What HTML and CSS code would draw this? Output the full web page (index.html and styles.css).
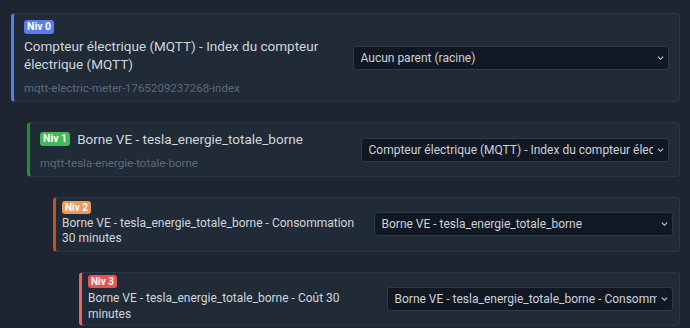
FILE: index.html
```html
<!DOCTYPE html>
<html lang="fr">
<head>
    <meta charset="UTF-8">
    <meta name="viewport" content="width=device-width, initial-scale=1.0">
    <title>Hiérarchie des capteurs</title>
    <link rel="stylesheet" href="styles.css">
</head>
<body>
    <div class="tree">

        <!-- Niveau 0 : racine -->
        <div class="node level-0">
            <div class="node-info">
                <span class="badge">Niv 0</span>
                <div class="node-title">Compteur électrique (MQTT) - Index du compteur électrique (MQTT)</div>
                <div class="node-id">mqtt-electric-meter-1765209237268-index</div>
            </div>
            <div class="select-wrap">
                <select>
                    <option>Aucun parent (racine)</option>
                </select>
                <svg class="chevron" viewBox="0 0 8 6"><path d="M1 1.5 L4 4.5 L7 1.5"/></svg>
            </div>
        </div>

        <!-- Niveau 1 -->
        <div class="node level-1">
            <div class="node-info">
                <div class="node-head">
                    <span class="badge">Niv 1</span>
                    <span class="node-title">Borne VE - tesla_energie_totale_borne</span>
                </div>
                <div class="node-id">mqtt-tesla-energie-totale-borne</div>
            </div>
            <div class="select-wrap">
                <select>
                    <option>Compteur électrique (MQTT) - Index du compteur électrique (MQTT)</option>
                </select>
                <svg class="chevron" viewBox="0 0 8 6"><path d="M1 1.5 L4 4.5 L7 1.5"/></svg>
            </div>
        </div>

        <!-- Niveau 2 -->
        <div class="node level-2">
            <div class="node-info">
                <span class="badge">Niv 2</span>
                <div class="node-title">Borne VE - tesla_energie_totale_borne - Consommation 30 minutes</div>
            </div>
            <div class="select-wrap">
                <select>
                    <option>Borne VE - tesla_energie_totale_borne</option>
                </select>
                <svg class="chevron" viewBox="0 0 8 6"><path d="M1 1.5 L4 4.5 L7 1.5"/></svg>
            </div>
        </div>

        <!-- Niveau 3 -->
        <div class="node level-3">
            <div class="node-info">
                <span class="badge">Niv 3</span>
                <div class="node-title">Borne VE - tesla_energie_totale_borne - Coût 30 minutes</div>
            </div>
            <div class="select-wrap">
                <select>
                    <option>Borne VE - tesla_energie_totale_borne - Consommation 30 minutes</option>
                </select>
                <svg class="chevron" viewBox="0 0 8 6"><path d="M1 1.5 L4 4.5 L7 1.5"/></svg>
            </div>
        </div>

    </div>
</body>
</html>
```

FILE: styles.css
```css
body {
    margin: 0;
    background-color: #1e2531;
    color: #d0d6dd;
    font-family: Roboto, "Noto Sans", sans-serif;
}
.tree {
    display: flex;
    flex-direction: column;
    gap: 20px;
    padding: 13px 10px 0 11px;
}
.node {
    display: flex;
    align-items: center;
    gap: 12px;
    background-color: #212a37;
    border: 1px solid #2c3645;
    border-left-width: 3px;
    border-radius: 4px;
    padding: 6px 10px 6px 10px;
}
.node-info {
    flex: 1 1 0;
    min-width: 0;
    display: flex;
    flex-direction: column;
    align-items: flex-start;
}
.select-wrap {
    flex: 1 1 0;
    min-width: 0;
    position: relative;
}
select {
    appearance: none;
    -webkit-appearance: none;
    display: block;
    width: 100%;
    height: 24px;
    padding: 0 15px 0 7px;
    background-color: #111824;
    color: #ccd2d9;
    border: 1px solid #2f3a48;
    border-radius: 3px;
    font-family: inherit;
    font-size: 12px;
}
.chevron {
    position: absolute;
    right: 5px;
    top: 9px;
    width: 7px;
    height: 6px;
    fill: none;
    stroke: #c8ced6;
    stroke-width: 1.3;
}
.badge {
    display: block;
    padding: 0 3px;
    border-radius: 3px;
    color: #ffffff;
    font-size: 10.5px;
    font-weight: 700;
    line-height: 14px;
}
.node-title {
    font-size: 13.5px;
    line-height: 18px;
    margin-top: 3px;
}
.node-id {
    font-size: 11.5px;
    line-height: 14px;
    color: #5e6979;
    margin-top: 8px;
}
.node-head {
    display: flex;
    align-items: center;
    gap: 7px;
}
.node-head .node-title {
    margin-top: 0;
}

/* Levels */
.level-0 {
    border-left-color: #5a7cf0;
}
.level-0 .badge {
    background-color: #5a7cf0;
}
.level-1 {
    margin-left: 16px;
    padding-top: 7px;
    border-left-color: #23913a;
}
.level-1 .badge {
    background-color: #3dbb55;
}
.level-2 {
    margin-left: 42px;
    padding: 3px 6px 5px 6px;
    border-left-color: #c0561c;
}
.level-2 .badge {
    background-color: #eb9a5e;
}
.level-3 {
    margin-left: 68px;
    padding: 2px 6px 3px 6px;
    border-left-color: #f06262;
}
.level-3 .badge {
    background-color: #e85454;
}
.level-2 .badge, .level-3 .badge {
    line-height: 13px;
    font-size: 10px;
}
.level-2 .node-title, .level-3 .node-title {
    font-size: 12px;
    line-height: 15px;
    margin-top: 2px;
}
.level-3 .node-title {
    line-height: 16px;
}
```
